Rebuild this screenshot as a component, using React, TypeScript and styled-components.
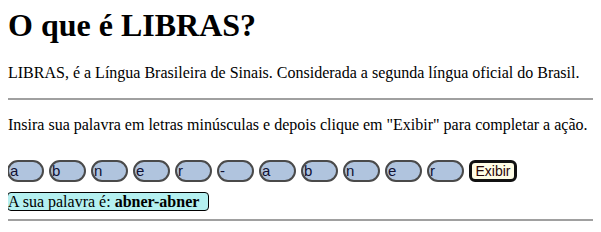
import styled, { createGlobalStyle } from 'styled-components';

const GlobalStyle = createGlobalStyle`
  body {
    margin: 8px;
    font-family: "Liberation Serif", "Times New Roman", serif;
    font-size: 16px;
    color: #000;
    background: #fff;
  }
`;

const letters = ['a', 'b', 'n', 'e', 'r', '-', 'a', 'b', 'n', 'e', 'r'];

function App() {
  return (
    <>
      <GlobalStyle />
      <Title>O que é LIBRAS?</Title>
      <Text>
        LIBRAS, é a Língua Brasileira de Sinais. Considerada a segunda língua
        oficial do Brasil.
      </Text>
      <Rule />
      <Text>
        Insira sua palavra em letras minúsculas e depois clique em "Exibir"
        para completar a ação.
      </Text>
      <LetterRow>
        {letters.map((l, i) => (
          <LetterInput key={i} defaultValue={l} />
        ))}
        <ShowButton>Exibir</ShowButton>
      </LetterRow>
      <Result>
        A sua palavra é: <b>abner-abner</b>
      </Result>
      <Rule />
    </>
  );
}

const Title = styled.h1`
  font-size: 32px;
  font-weight: bold;
  margin: 0 0 22px;
  line-height: 34px;
`;

const Text = styled.p`
  margin: 16px 0;
  line-height: 18px;
`;

const Rule = styled.hr`
  margin: 8px 0;
  border: none;
  border-top: 2px solid #a0a0a0;
  height: 0;
`;

const LetterRow = styled.div`
  display: flex;
  align-items: center;
  gap: 5px;
  margin-top: 26px;
  margin-left: -1px;
`;

const LetterInput = styled.input`
  box-sizing: border-box;
  width: 37px;
  height: 22px;
  padding: 0 1px 1px;
  border: 2px solid #4a4a4a;
  border-radius: 11px;
  background: #b0c4de;
  font-family: "Liberation Sans", Arial, sans-serif;
  font-size: 15px;
  line-height: 17px;
  color: #111133;
  outline: none;
`;

const ShowButton = styled.button`
  box-sizing: border-box;
  width: 48px;
  height: 22px;
  padding: 0;
  border: 3px solid #111;
  border-radius: 6px;
  background: #fffde6;
  font-family: "Liberation Sans", Arial, sans-serif;
  font-size: 14px;
  color: #2a0606;
`;

const Result = styled.div`
  display: inline-block;
  box-sizing: border-box;
  margin: 10px 0 0 -1px;
  padding: 0 9px 0 0;
  height: 19px;
  line-height: 17px;
  border: 1px solid #000;
  border-radius: 4px;
  background: #b4f0f0;
`;

export default App;
